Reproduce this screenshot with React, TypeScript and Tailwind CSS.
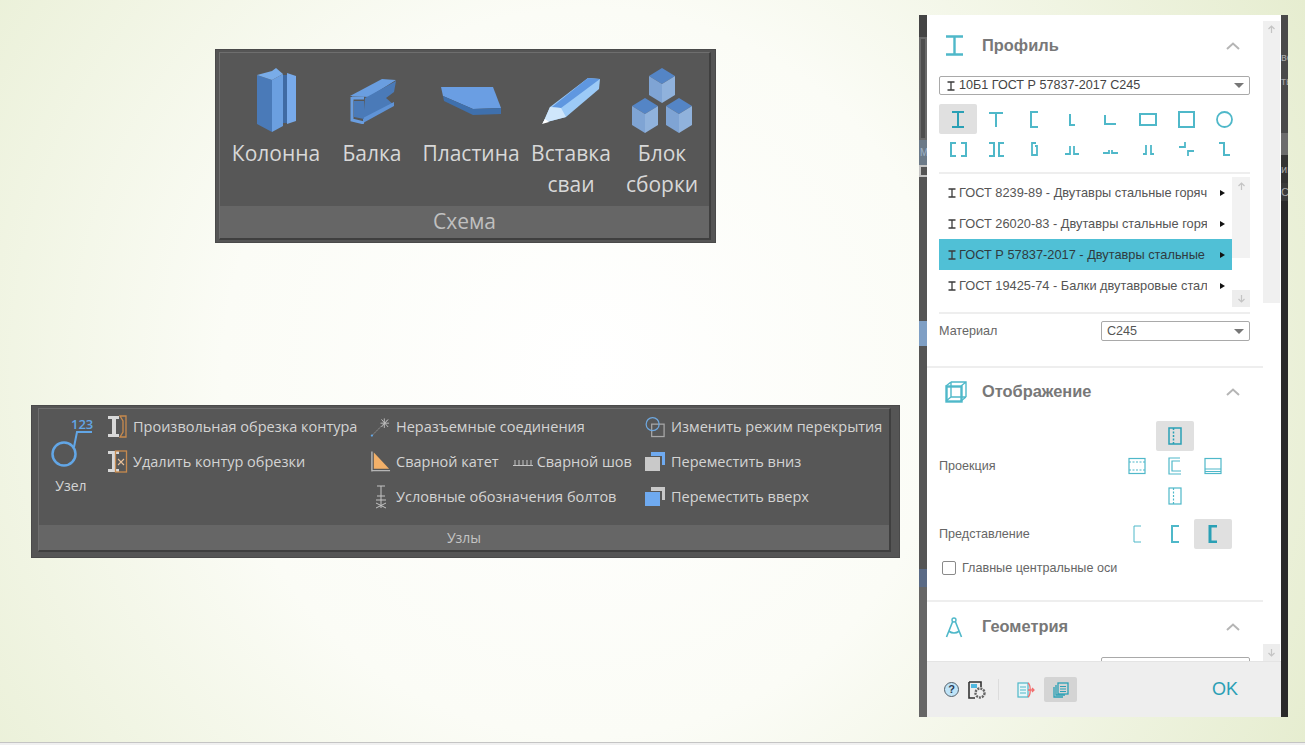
import type { ReactNode } from "react";

const teal = "#4fb8c9";
const tealDark = "#2aa0b5";

function Svg({ w, h, children, className }: { w: number; h: number; children: ReactNode; className?: string }) {
  return (
    <svg width={w} height={h} viewBox={`0 0 ${w} ${h}`} fill="none" className={className}>
      {children}
    </svg>
  );
}

function ColumnIcon() {
  return (
    <Svg w={41} h={65}>
      <path d="M1 7 L16 12 L16 64 L1 56 Z" fill="#4a7ab8" />
      <path d="M16 12 L27 6 L27 58 L16 64 Z" fill="#6b9fe0" />
      <path d="M1 7 L16 3 L20 0 L27 6 L16 12 Z" fill="#79ace8" />
      <path d="M27 7 H31 V55 H27 Z" fill="#3f6aa3" />
      <path d="M31 5 L40 8 L40 53 L31 56 Z" fill="#78aaea" />
    </Svg>
  );
}

function BeamIcon() {
  return (
    <Svg w={47} h={46}>
      <path d="M1 18 L33 1 L47 2 L20 19 Z" fill="#6a9ee0" />
      <path d="M16 20 L47 3 L45 14 L37 20 L45 27 L14 44 Z" fill="#4a7ab8" />
      <path d="M14 40 L45 24 L45 28 L14 45 Z" fill="#5f93d6" />
      <path d="M3 20 H15 M3 19 V42 L15 45" stroke="#6a9ee0" strokeWidth="3" />
      <path d="M5 23 H15 V41 L5 39 Z" fill="#4a7ab8" />
    </Svg>
  );
}

function PlateIcon() {
  return (
    <Svg w={60} h={29}>
      <path d="M0 1 H52 L60 22 L32 23 L2 10 Z" fill="#6a9ee3" />
      <path d="M2 10 L32 23 L60 22 V28 L32 29 L3 15 Z" fill="#3f70ad" />
    </Svg>
  );
}

function PileIcon() {
  return (
    <Svg w={58} h={47}>
      <path d="M1 46 L8 30 L46 1 L58 2 L57 12 L24 40 Z" fill="#9ccaf7" />
      <path d="M10 30 L46 1 L58 2 L19 31 Z" fill="#5f97e0" />
      <path d="M1 46 L8 30 L19 31 L24 40 Z" fill="#cfe6fb" />
      <path d="M0 47 L7 45 L3 42 Z" fill="#ffffff" />
    </Svg>
  );
}

function Cube({ x, y }: { x: number; y: number }) {
  return (
    <g transform={`translate(${x} ${y})`}>
      <path d="M0 8 L13 0 L26 8 L13 16 Z" fill="#5485c6" />
      <path d="M0 8 L13 16 L13 35 L0 27 Z" fill="#7fa4d4" />
      <path d="M26 8 L13 16 L13 35 L26 27 Z" fill="#90b2dc" />
    </g>
  );
}

function BlockIcon() {
  return (
    <Svg w={60} h={66}>
      <Cube x={17} y={0} />
      <Cube x={0} y={30} />
      <Cube x={34} y={30} />
    </Svg>
  );
}

function SchemaItem({ lines, width, icon }: { lines: string[]; width: string; icon: ReactNode }) {
  return (
    <div className={`flex flex-col items-center shrink-0 ${width}`}>
      <div className="h-[72px] pb-[3px] flex items-center justify-center">{icon}</div>
      <div className="text-[21px] leading-[31px] text-center text-[#d8d8d8] whitespace-nowrap">
        {lines.map((l) => (
          <div key={l}>{l}</div>
        ))}
      </div>
    </div>
  );
}

const frame = "border-t border-l border-b-2 border-r-2 border-t-[#6e6e6e] border-l-[#6e6e6e] border-b-[#3f3f3f] border-r-[#3f3f3f]";

function SchemaPanel() {
  return (
    <div className="absolute left-[215px] top-[49px] w-[501px] h-[194px] bg-[#555555] border border-[#4a4a4a] pl-[3px] pr-[3px] pt-[2px] pb-[2px] font-['Open_Sans',sans-serif]">
      <div className={`h-full mr-[1px] flex flex-col ${frame}`}>
        <div className="h-[153px] bg-[#575757] flex pt-[13px] pl-[14px]">
          <SchemaItem lines={["Колонна"]} width="w-[84px]" icon={<ColumnIcon />} />
          <SchemaItem lines={["Балка"]} width="w-[108px]" icon={<BeamIcon />} />
          <SchemaItem lines={["Пластина"]} width="w-[90px]" icon={<PlateIcon />} />
          <SchemaItem lines={["Вставка", "сваи"]} width="w-[110px]" icon={<PileIcon />} />
          <SchemaItem lines={["Блок", "сборки"]} width="w-[72px]" icon={<BlockIcon />} />
        </div>
        <div className="flex-1 bg-[#666666] flex items-center justify-center text-[21px] text-[#c0c0c0]">Схема</div>
      </div>
    </div>
  );
}

function NodeIcon() {
  return (
    <Svg w={44} h={54}>
      <circle cx="15" cy="40" r="11.5" stroke="#62a6e6" strokeWidth="2.5" />
      <path d="M25 33 L28 18 L43 18" stroke="#62a6e6" strokeWidth="2" />
      <text x="22" y="15" fontSize="13" fontWeight="600" fill="#62a6e6" fontFamily="Open Sans, sans-serif">
        123
      </text>
    </Svg>
  );
}

function TrimIcon({ cross }: { cross?: boolean }) {
  return (
    <Svg w={21} h={24}>
      <path d="M1 1 H12 V4 H9 V19 H12 V22 H1 V19 H5 V4 H1 Z" fill="#d8d8d8" />
      {cross ? (
        <>
          <rect x="8.5" y="1" width="11" height="21" stroke="#c88a4e" strokeWidth="1.3" />
          <path d="M11 9 L17 15 M17 9 L11 15" stroke="#e8c09a" strokeWidth="1.1" />
        </>
      ) : (
        <path d="M13 1 H19 V22 H13 L16 17 V6 Z" stroke="#c88a4e" strokeWidth="1.3" />
      )}
    </Svg>
  );
}

function WeldJoinIcon() {
  return (
    <Svg w={22} h={22}>
      <path d="M2 20 L19 3" stroke="#9a9a9a" strokeWidth="1" strokeDasharray="2 1" />
      <path d="M11 7 L20 7 M15 2 L15 12 M12 3 L19 11 M19 3 L12 11" stroke="#bdbdbd" strokeWidth="1" />
      <circle cx="2" cy="20" r="1.2" fill="#62a6e6" />
    </Svg>
  );
}

function WeldLegIcon() {
  return (
    <Svg w={22} h={24}>
      <path d="M4 2 L4 19 L20 19 Z" fill="#f2b069" />
      <path d="M2 1 V22 M2 21 H21" stroke="#b5b5b5" strokeWidth="1.5" />
    </Svg>
  );
}

function BoltIcon() {
  return (
    <Svg w={14} h={24}>
      <path d="M3 1 H11 M7 1 V23 M3 11 H11 M2 15 H12 M2 18 L12 23 M12 18 L2 23" stroke="#c4c4c4" strokeWidth="1" />
    </Svg>
  );
}

function SeamIcon() {
  return (
    <Svg w={20} h={10}>
      <path d="M0 8.5 H20 M2 3 V8 M6 3 V8 M10 3 V8 M14 3 V8 M18 3 V8" stroke="#c4c4c4" strokeWidth="1" />
    </Svg>
  );
}

function OverlapIcon() {
  return (
    <Svg w={22} h={22}>
      <rect x="7" y="8" width="13" height="13" stroke="#a8a8a8" strokeWidth="1.3" />
      <circle cx="8" cy="8" r="6.8" stroke="#6ea8e0" strokeWidth="1.3" />
    </Svg>
  );
}

function StackIcon({ front, back }: { front: string; back: string }) {
  return (
    <Svg w={21} h={19}>
      <path d="M6 0 H20 V13 H17 V4 H6 Z" fill={back} />
      <rect x="0" y="5" width="15" height="14" fill={front} />
    </Svg>
  );
}

function NodeRow({ icon, label }: { icon: ReactNode; label: string }) {
  return (
    <div className="flex items-center h-[35px] whitespace-nowrap">
      <span className="flex justify-center shrink-0 w-[21px]">{icon}</span>
      <span className="ml-[5px]">{label}</span>
    </div>
  );
}

function NodesPanel() {
  return (
    <div className="absolute left-[31px] top-[405px] w-[869px] h-[153px] bg-[#555555] border border-[#4a4a4a] pl-[6px] pr-[8px] pt-[2px] pb-[5px] font-['Open_Sans',sans-serif]">
      <div className={`h-full flex flex-col ${frame}`}>
        <div className="h-[116px] bg-[#575757] flex text-[14.5px] text-[#d4d4d4]">
          <div className="w-[68px] shrink-0 flex flex-col pr-[4px] items-center pt-[5px]">
            <NodeIcon />
            <span className="text-[14px] mt-[7px]">Узел</span>
          </div>
          <div className="w-[263px] shrink-0">
            <NodeRow icon={<TrimIcon />} label="Произвольная обрезка контура" />
            <NodeRow icon={<TrimIcon cross />} label="Удалить контур обрезки" />
          </div>
          <div className="w-[275px] shrink-0">
            <NodeRow icon={<WeldJoinIcon />} label="Неразъемные соединения" />
            <div className="flex items-center">
              <NodeRow icon={<WeldLegIcon />} label="Сварной катет" />
              <span className="ml-[14px] mr-[4px]">
                <SeamIcon />
              </span>
              <span className="whitespace-nowrap">Сварной шов</span>
            </div>
            <NodeRow icon={<BoltIcon />} label="Условные обозначения болтов" />
          </div>
          <div className="flex-1">
            <NodeRow icon={<OverlapIcon />} label="Изменить режим перекрытия" />
            <NodeRow icon={<StackIcon front="#c9c9c9" back="#6faaf0" />} label="Переместить вниз" />
            <NodeRow icon={<StackIcon front="#6faaf0" back="#c9c9c9" />} label="Переместить вверх" />
          </div>
        </div>
        <div className="flex-1 bg-[#666666] flex items-center justify-center text-[14px] text-[#c4c4c4]">Узлы</div>
      </div>
    </div>
  );
}

function Chevron() {
  return (
    <Svg w={14} h={8}>
      <path d="M1 7 L7 1.5 L13 7" stroke="#b5b5b5" strokeWidth="2" />
    </Svg>
  );
}

function Header({ icon, title, pt }: { icon: ReactNode; title: string; pt: string }) {
  return (
    <div className={`flex items-center h-[21px] box-content pl-[18px] pr-[23px] ${pt}`}>
      <span className="w-[37px] h-[21px] flex items-center justify-start">{icon}</span>
      <span className="text-[16.4px] leading-[21px] font-bold text-[#787878]">{title}</span>
      <span className="ml-auto flex">
        <Chevron />
      </span>
    </div>
  );
}

function Caret() {
  return <span className="ml-auto w-0 h-0 border-x-[5px] border-x-transparent border-t-[5px] border-t-[#777777]" />;
}

function IBeamSmall() {
  return (
    <Svg w={8} h={10} className="shrink-0">
      <path d="M0.5 1 H7.5 M4 1 V9 M0.5 9 H7.5" stroke="#3b3b3b" strokeWidth="1.3" />
    </Svg>
  );
}

const shapePaths: Record<string, ReactNode> = {
  i: <path d="M3 2 H15 M9 2 V17 M3 17 H15" strokeWidth="2" />,
  t: <path d="M2 3 H16 M9 3 V17" strokeWidth="2" />,
  c: <path d="M13 2 H6 V17 H13" strokeWidth="2" />,
  l: <path d="M7 4 V15 H12" strokeWidth="2" />,
  a: <path d="M4 5 V14 H15" strokeWidth="2" />,
  rect: <rect x="1" y="4" width="16" height="11" strokeWidth="2" />,
  sq: <rect x="2" y="2" width="15" height="15" strokeWidth="2" />,
  o: <circle cx="9.5" cy="9.5" r="7.5" strokeWidth="1.8" />,
  cc: <path d="M7 3 H2 V16 H7 M12 3 H17 V16 H12" strokeWidth="2" />,
  dc: <path d="M2 3 H7 V16 H2 M17 3 H12 V16 H17" strokeWidth="2" />,
  cz: <path d="M11 3 H7 V15 H12 V6 H10" strokeWidth="1.8" />,
  ll: <path d="M2 14 H7 V6 M11 6 V14 H16" strokeWidth="1.8" />,
  ll2: <path d="M2 13 H8 V10 M11 10 V13 H17" strokeWidth="1.8" />,
  ll3: <path d="M4 14 H7 V5 M12 5 V14 H15" strokeWidth="1.8" />,
  zz: <path d="M2 7 H8 V2 M11 16 V11 H17" strokeWidth="1.8" />,
  z: <path d="M4 3 H9 V15 H15" strokeWidth="2" />,
};

function Shape({ name, active }: { name: string; active?: boolean }) {
  return (
    <div className={`w-[38px] h-[30px] flex items-center justify-center rounded-[2px] ${active ? "bg-[#e0e0e0]" : ""}`}>
      <svg width="19" height="19" viewBox="0 0 19 19" fill="none" stroke={active ? tealDark : teal}>
        {shapePaths[name]}
      </svg>
    </div>
  );
}

function ViewIcon({ kind, active }: { kind: string; active?: boolean }) {
  const thin = { stroke: active ? tealDark : teal, strokeWidth: active ? 1.5 : 1.2 };
  if (kind === "side")
    return (
      <Svg w={14} h={18}>
        <rect x="1" y="1" width="12" height="16" {...thin} />
        <path d="M5.5 1 V17" {...thin} strokeDasharray="2 1.5" />
      </Svg>
    );
  if (kind === "top")
    return (
      <Svg w={18} h={18}>
        <rect x="1" y="1.5" width="16" height="15" {...thin} />
        <path d="M1 5 H17 M1 13 H17" {...thin} strokeDasharray="2 1.5" />
      </Svg>
    );
  if (kind === "front")
    return (
      <Svg w={14} h={18}>
        <path d="M12 1 H1 V17 H13 M12 4 H4 V14 H13" {...thin} />
      </Svg>
    );
  return (
    <Svg w={18} h={18}>
      <rect x="1" y="1.5" width="16" height="15" {...thin} />
      <path d="M1 12 H17 M1 14.5 H17" {...thin} />
    </Svg>
  );
}

function Brace({ width, color }: { width: number; color: string }) {
  return (
    <Svg w={10} h={18}>
      <path d="M9 1 H2 V17 H9" stroke={color} strokeWidth={width} />
    </Svg>
  );
}

function Arrow({ down }: { down?: boolean }) {
  return (
    <svg width="9" height="9" viewBox="0 0 9 9" fill="none" stroke="#c4c4c4" strokeWidth="1.2" className={down ? "rotate-180" : ""}>
      <path d="M4.5 8 V1 M1.5 4 L4.5 1 L7.5 4" />
    </svg>
  );
}

function GostRow({ text, active }: { text: string; active?: boolean }) {
  return (
    <div className={`h-[31px] flex items-center pl-[9px] pr-[7px] text-[12.8px] ${active ? "bg-[#50c0d6]" : ""}`}>
      <IBeamSmall />
      <span className={`ml-[3px] w-[248px] overflow-hidden whitespace-nowrap ${active ? "text-[#2f3b40]" : "text-[#555555]"}`}>{text}</span>
      <span className="ml-auto w-0 h-0 border-y-[3.5px] border-y-transparent border-l-[5px] border-l-[#111111]" />
    </div>
  );
}

function Footer() {
  return (
    <div className="flex-1 bg-[#eeeeee] border-t border-[#e4e4e4] flex items-center pl-[17px] pr-[43px]">
      <span className="w-[15px] h-[15px] rounded-full bg-[#bfe3f7] border border-[#55616b] flex items-center justify-center text-[11px] font-bold text-[#2c3a52]">?</span>
      <Svg w={18} h={18} className="ml-[9px]">
        <path d="M1 1 H13 V6 M1 1 V17 H7" stroke="#333333" strokeWidth="1.6" />
        <rect x="3" y="3" width="6" height="4" fill="#4fb8e0" />
        <circle cx="12" cy="12" r="4.5" stroke="#666666" strokeWidth="2.4" strokeDasharray="2 1" />
      </Svg>
      <span className="ml-[12px] w-px h-[21px] bg-[#dcdcdc]" />
      <Svg w={18} h={16} className="ml-[18px]">
        <rect x="1" y="1" width="10" height="14" stroke={teal} fill="#e8f6f8" strokeWidth="1.2" />
        <path d="M3 5 H9 M3 8 H9 M3 11 H9" stroke={teal} />
        <path d="M11 1 C14 3 14 13 11 15 M11 8 H17 M15 6 L17 8 L15 10" stroke="#f26d6d" strokeWidth="1.3" />
      </Svg>
      <span className="ml-[9px] w-[33px] h-[25px] bg-[#d4d4d4] rounded-[2px] flex items-center justify-center">
        <Svg w={16} h={16}>
          <rect x="5" y="1" width="10" height="11" stroke={tealDark} strokeWidth="1.3" fill="#d4d4d4" />
          <path d="M7 4.5 H13 M7 7 H13 M7 9.5 H13" stroke={tealDark} />
          <path d="M3 3 V13 H12 M1 5 V15 H10" stroke={tealDark} strokeWidth="1.3" />
        </Svg>
      </span>
      <span className="ml-auto text-[18px] text-[#2a9fb5]">OK</span>
    </div>
  );
}

function ProfileSection() {
  return (
    <div className="h-[353px] border-b-2 border-[#eeeeee]">
      <Header
        pt="pt-[20px]"
        title="Профиль"
        icon={
          <Svg w={19} h={21}>
            <path d="M1 1.5 H18 M9.5 1.5 V19.5 M1 19.5 H18" stroke={teal} strokeWidth="2.4" />
          </Svg>
        }
      />
      <div className="pl-[12px] pt-[20px] w-[323px]">
        <div className="h-[19px] border border-[#a9a9a9] rounded-[2px] flex items-center pl-[7px] pr-[5px] text-[#444444]">
          <IBeamSmall />
          <span className="ml-[4px]">10Б1 ГОСТ Р 57837-2017 С245</span>
          <Caret />
        </div>
        <div className="grid grid-cols-[repeat(8,38px)] mt-[9px]">
          {["i", "t", "c", "l", "a", "rect", "sq", "o"].map((s, i) => (
            <Shape key={s} name={s} active={i === 0} />
          ))}
          {["cc", "dc", "cz", "ll", "ll2", "ll3", "zz", "z"].map((s) => (
            <Shape key={s} name={s} />
          ))}
        </div>
        <div className="h-[2px] bg-[#eeeeee] mt-[8px]" />
        <div className="flex mt-[3px] h-[130px]">
          <div className="w-[293px] shrink-0">
            <GostRow text="ГОСТ 8239-89 - Двутавры стальные горячекатаные" />
            <GostRow text="ГОСТ 26020-83 - Двутавры стальные горячекатаные" />
            <GostRow text="ГОСТ Р 57837-2017 - Двутавры стальные горячекатаные" active />
            <GostRow text="ГОСТ 19425-74 - Балки двутавровые стальные" />
          </div>
          <div className="flex-1 flex flex-col justify-between">
            <div className="h-[81px] bg-[#f2f2f2] flex justify-center pt-[5px]">
              <Arrow />
            </div>
            <div className="h-[17px] bg-[#ededed] flex items-center justify-center">
              <Arrow down />
            </div>
          </div>
        </div>
        <div className="h-[2px] bg-[#eeeeee] mt-[5px]" />
        <div className="flex items-center justify-between mt-[7px]">
          <span className="text-[#666666]">Материал</span>
          <div className="w-[149px] h-[20px] border border-[#a9a9a9] rounded-[2px] flex items-center pl-[5px] pr-[5px] text-[#555555]">
            С245
            <Caret />
          </div>
        </div>
      </div>
    </div>
  );
}

function DisplaySection() {
  const cell = "w-[38px] h-[30px] flex items-center justify-center rounded-[2px]";
  return (
    <div className="h-[234px] border-b-2 border-[#eeeeee]">
      <Header
        pt="pt-[13px]"
        title="Отображение"
        icon={
          <Svg w={22} h={22}>
            <rect x="1.5" y="5.5" width="15" height="15" stroke={teal} strokeWidth="2.4" />
            <path d="M6 1 H21 V16 M6 1 V16 H21 M1 5 L6 1 M16 5 L21 1 M1 20 L6 16 M16 20 L21 16" stroke={teal} strokeWidth="1.4" />
          </Svg>
        }
      />
      <div className="pl-[12px] pt-[19px] grid grid-cols-[179px_38px_38px_38px] grid-rows-[30px_30px_30px] items-center text-[#666666]">
        <div className={`${cell} col-start-3 row-start-1 bg-[#e0e0e0]`}>
          <ViewIcon kind="side" active />
        </div>
        <span className="col-start-1 row-start-2">Проекция</span>
        <div className={`${cell} col-start-2 row-start-2`}>
          <ViewIcon kind="top" />
        </div>
        <div className={`${cell} col-start-3 row-start-2`}>
          <ViewIcon kind="front" />
        </div>
        <div className={`${cell} col-start-4 row-start-2`}>
          <ViewIcon kind="bottom" />
        </div>
        <div className={`${cell} col-start-3 row-start-3`}>
          <ViewIcon kind="side" />
        </div>
      </div>
      <div className="pl-[12px] mt-[8px] grid grid-cols-[179px_38px_38px_38px] items-center text-[#666666]">
        <span>Представление</span>
        <div className={cell}>
          <Brace width={1} color={teal} />
        </div>
        <div className={cell}>
          <Brace width={2} color={teal} />
        </div>
        <div className={`${cell} bg-[#e0e0e0]`}>
          <Brace width={3} color={tealDark} />
        </div>
      </div>
      <div className="pl-[15px] mt-[10px] flex items-center text-[#666666]">
        <span className="w-[14px] h-[14px] border-[1.5px] border-[#8a8a8a] rounded-[2px]" />
        <span className="ml-[6px]">Главные центральные оси</span>
      </div>
    </div>
  );
}

function GeometrySection() {
  return (
    <div>
      <Header
        pt="pt-[14px]"
        title="Геометрия"
        icon={
          <Svg w={18} h={22}>
            <circle cx="9" cy="4" r="2" stroke={teal} strokeWidth="1.4" />
            <path d="M7.5 6 L1.5 21 M10.5 6 L16.5 21 M3.5 15 Q9 19 14.5 15" stroke={teal} strokeWidth="1.6" />
          </Svg>
        }
      />
      <div className="ml-[174px] mt-[20px] w-[149px] h-[20px] border border-[#a9a9a9] rounded-[2px]" />
    </div>
  );
}

function PropsPanel() {
  return (
    <div className="absolute left-[919px] top-[15px] w-[369px] h-[702px] flex font-['Liberation_Sans',sans-serif] text-[12.6px]">
      <div className="w-[8px] shrink-0 flex flex-col bg-[#555555] text-[#9fb4c8] text-[10px] overflow-hidden">
        <div className="h-[22px] bg-[#444444]" />
        <div className="h-[103px] border-2 border-[#6a6a6a] bg-[#4e4e4e]" />
        <div className="h-[25px] bg-[#6c7a88] leading-[25px] pl-[1px]">М</div>
        <div className="h-[12px] border-2 border-r-0 border-[#c4c4c4]" />
        <div className="h-[144px]" />
        <div className="h-[25px] bg-[#7f9fc4]" />
        <div className="h-[223px]" />
        <div className="h-[18px] bg-[#5a6a85]" />
        <div className="flex-1 bg-[#666666]" />
      </div>
      <div className="w-[354px] shrink-0 bg-white flex flex-col">
        <div className="h-[646px] flex overflow-hidden">
          <div className="w-[336px] shrink-0">
            <ProfileSection />
            <DisplaySection />
            <GeometrySection />
          </div>
          <div className="w-[17px] shrink-0 flex flex-col justify-between pt-[6px]">
            <div className="h-[282px] bg-[#f0f0f0] flex justify-center pt-[4px]">
              <Arrow />
            </div>
            <div className="h-[17px] bg-[#ededed] flex items-center justify-center">
              <Arrow down />
            </div>
          </div>
        </div>
        <Footer />
      </div>
      <div className="flex-1 flex flex-col overflow-hidden text-[11px] text-[#a8a8a8] bg-[#2a2a2a]">
        <div className="h-[118px] bg-[#4a4a4a] pt-[30px] leading-[24px] whitespace-nowrap">
          <div>ве</div>
          <div>ть</div>
        </div>
        <div className="h-[22px] bg-[#6c6c6c]" />
        <div className="h-[28px] bg-[#333333] leading-[28px] whitespace-nowrap">им</div>
        <div className="h-[18px] bg-[#3a3a3a] leading-[18px] whitespace-nowrap">Се</div>
      </div>
    </div>
  );
}

export default function App() {
  return (
    <div className="relative w-[1305px] h-[745px] overflow-hidden bg-[radial-gradient(circle_at_45%_50%,#ffffff_0%,#fbfcf6_45%,#e6edd0_100%)]">
      <SchemaPanel />
      <NodesPanel />
      <PropsPanel />
      <div className="absolute left-0 right-0 bottom-0 h-[3px] bg-[#f0f0f0] border-t border-[#c4c4c4]" />
    </div>
  );
}
